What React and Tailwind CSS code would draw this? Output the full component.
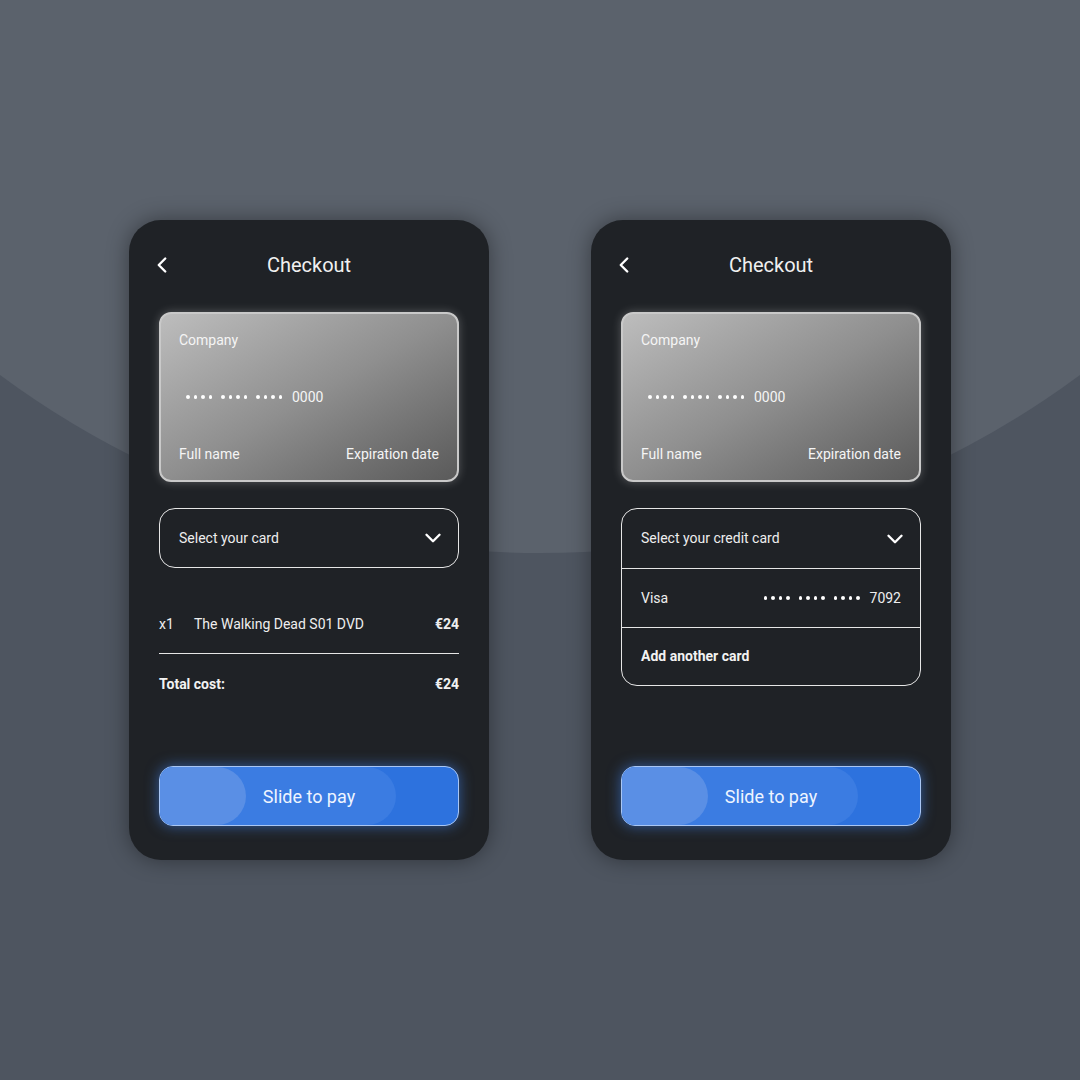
import React from 'react';
import { ChevronLeft, ChevronDown } from 'lucide-react';

const Dots = () => (
  <span className="flex items-center gap-[9px]">
    {[0, 1, 2].map((g) => (
      <span key={g} className="flex items-center gap-[4px]">
        {[0, 1, 2, 3].map((d) => (
          <span key={d} className="w-[3.5px] h-[3.5px] rounded-full bg-white" />
        ))}
      </span>
    ))}
  </span>
);

const CardPreview = () => (
  <div className="h-[170px] rounded-[12px] border-2 border-[#c9c9c9] bg-gradient-to-br from-[#bdbdbd] via-[#8f8f8f] to-[#5a5a5a] shadow-[0_0_10px_rgba(255,255,255,0.25)] px-[18px] py-[16px] flex flex-col justify-between text-[14px] leading-5 text-[#f5f5f5]">
    <div>Company</div>
    <div className="flex items-center gap-[10px] pl-[7px]">
      <Dots />
      <span>0000</span>
    </div>
    <div className="flex justify-between">
      <span>Full name</span>
      <span>Expiration date</span>
    </div>
  </div>
);

const SlideToPay = () => (
  <div className="relative h-[60px] rounded-[14px] border border-[#a9c6f3] bg-[#2d72de] overflow-hidden shadow-[0_0_14px_rgba(70,140,255,0.55)]">
    <div className="absolute left-0 top-0 h-full w-[236px] rounded-r-[30px] bg-[#3b7ce2]" />
    <div className="absolute left-0 top-0 h-full w-[86px] rounded-r-[30px] bg-[#5a8fe5]" />
    <div className="relative h-full flex items-center justify-center text-[18px] text-[#eef4ff]">Slide to pay</div>
  </div>
);

const Header = () => (
  <div className="relative h-[30px] flex items-center justify-center">
    <ChevronLeft className="absolute left-[-10px] text-white" size={26} strokeWidth={2.2} />
    <h1 className="text-[20px] text-[#f0f0f0]">Checkout</h1>
  </div>
);

const Phone = ({ children }) => (
  <div className="w-[360px] h-[640px] rounded-[32px] bg-[#1f2226] shadow-[0_0_22px_rgba(0,0,0,0.4)] px-[30px] pt-[30px] pb-[34px] flex flex-col">
    <Header />
    <div className="mt-[32px]">
      <CardPreview />
    </div>
    {children}
    <div className="mt-auto">
      <SlideToPay />
    </div>
  </div>
);

export default function App() {
  return (
    <div
      className="relative w-[1080px] h-[1080px] overflow-hidden bg-[#4e5560] flex items-center justify-center gap-[102px]"
      style={{ fontFamily: 'Roboto, "Noto Sans", sans-serif' }}
    >
      <div className="absolute left-[-368px] top-[-1263px] w-[1816px] h-[1816px] rounded-full bg-[#5b626c]" />

      <div className="relative">
        <Phone>
          <div className="mt-[26px] h-[60px] rounded-[16px] border border-[#e6e6e6] pl-[19px] pr-[12px] flex items-center justify-between text-[14px] text-[#eeeeee]">
            <span>Select your card</span>
            <ChevronDown className="text-white" size={26} strokeWidth={2.2} />
          </div>
          <div className="mt-[46px] flex items-center text-[14px] leading-5 text-[#eeeeee]">
            <span className="w-[35px]">x1</span>
            <span className="flex-1">The Walking Dead S01 DVD</span>
            <span className="font-bold">€24</span>
          </div>
          <div className="mt-[19px] h-px bg-[#e6e6e6]" />
          <div className="mt-[20px] flex items-center justify-between text-[14px] leading-5 font-bold text-[#f2f2f2]">
            <span>Total cost:</span>
            <span>€24</span>
          </div>
        </Phone>
      </div>

      <div className="relative">
        <Phone>
          <div className="mt-[26px] rounded-[16px] border border-[#e6e6e6] text-[14px] text-[#eeeeee] flex flex-col">
            <div className="h-[59px] pl-[19px] pr-[12px] flex items-center justify-between">
              <span>Select your credit card</span>
              <ChevronDown className="text-white" size={26} strokeWidth={2.2} />
            </div>
            <div className="h-[59px] border-t border-[#e6e6e6] px-[19px] flex items-center justify-between">
              <span>Visa</span>
              <span className="flex items-center gap-[10px]">
                <Dots />
                <span>7092</span>
              </span>
            </div>
            <div className="h-[58px] border-t border-[#e6e6e6] px-[19px] flex items-center font-bold text-[#f2f2f2]">
              Add another card
            </div>
          </div>
        </Phone>
      </div>
    </div>
  );
}
